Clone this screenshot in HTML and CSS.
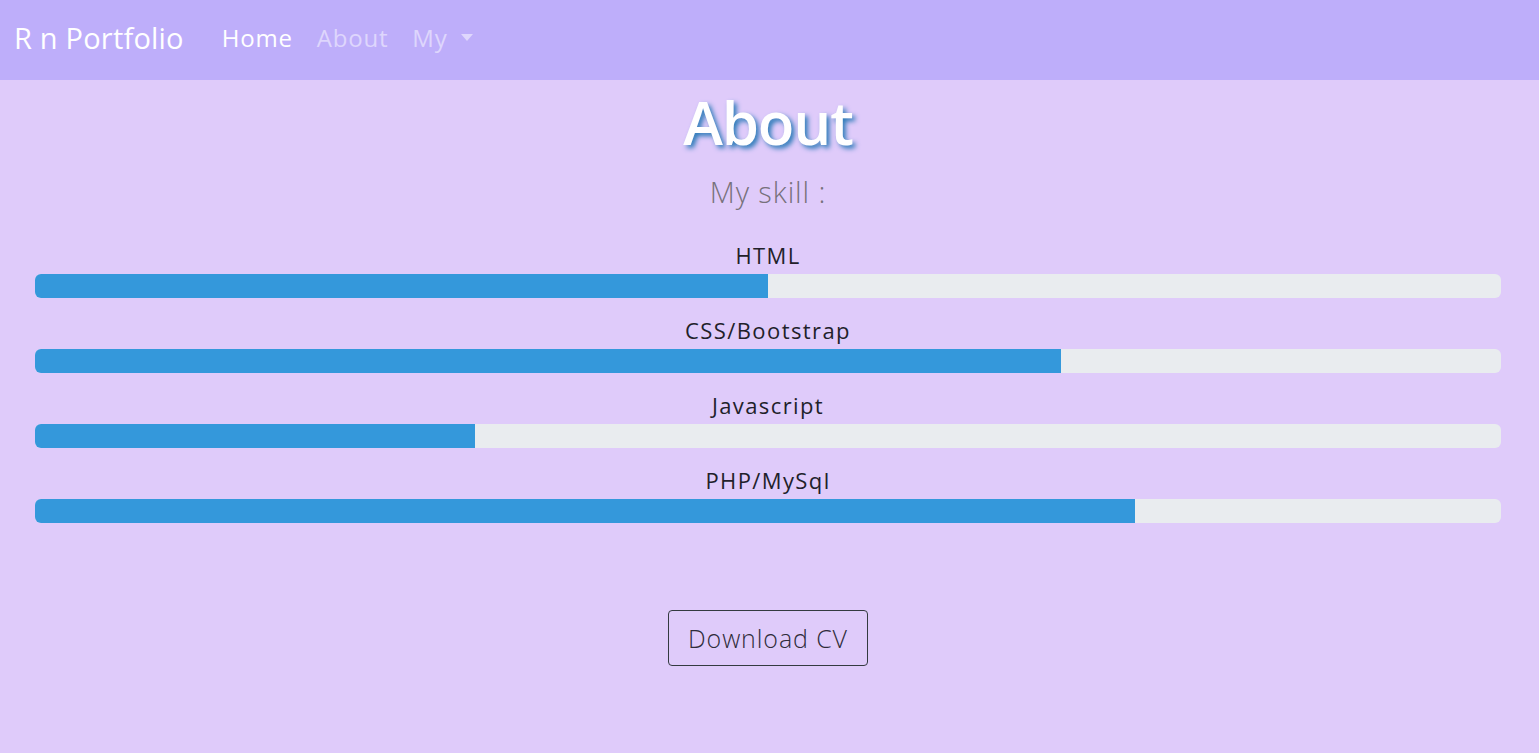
FILE: index.html
```html
<!DOCTYPE html>
<html>
<head>
<meta charset="utf-8">
<link rel="stylesheet" href="styles.css">
</head>
<body>
<nav class="navbar">
  <a class="brand" href="#">R n Portfolio</a>
  <ul class="nav">
    <li><a class="nav-link active" href="#">Home</a></li>
    <li><a class="nav-link" href="#">About</a></li>
    <li><a class="nav-link dropdown" href="#">My</a></li>
  </ul>
</nav>
<main class="about">
  <h1 class="title">About</h1>
  <h3 class="subtitle">My skill :</h3>
  <div class="skills">
    <div class="skill">
      <div class="label">HTML</div>
      <div class="progress"><div class="bar" style="width:50%"></div></div>
    </div>
    <div class="skill">
      <div class="label">CSS/Bootstrap</div>
      <div class="progress"><div class="bar" style="width:70%"></div></div>
    </div>
    <div class="skill">
      <div class="label">Javascript</div>
      <div class="progress"><div class="bar" style="width:30%"></div></div>
    </div>
    <div class="skill">
      <div class="label">PHP/MySql</div>
      <div class="progress"><div class="bar" style="width:75%"></div></div>
    </div>
  </div>
  <div class="actions">
    <a class="btn" href="#">Download CV</a>
  </div>
</main>
</body>
</html>
```
FILE: styles.css
```css
* { box-sizing: border-box; }
html, body { margin: 0; padding: 0; }
body {
  font-family: "Open Sans", "Noto Sans", sans-serif;
  background: #dfcbfa;
  color: #212529;
  height: 753px;
  overflow: hidden;
}
a { text-decoration: none; }
.navbar {
  height: 80px;
  background: #beaefa;
  display: flex;
  align-items: center;
  padding: 0 14px 5px;
}
.brand {
  color: #fff;
  font-size: 29px;
  font-weight: 400;
  margin-right: 26px;
  letter-spacing: 0.2px;
}
.nav {
  display: flex;
  list-style: none;
  margin: 0;
  padding: 0;
}
.nav-link {
  display: block;
  font-size: 24px;
  letter-spacing: 0.8px;
  color: rgba(255,255,255,0.5);
  padding: 0 12px 0 12px;
}
.nav-link.active { color: #fff; }
.dropdown::after {
  content: "";
  display: inline-block;
  margin-left: 13px;
  vertical-align: 6px;
  border-top: 7px solid;
  border-left: 6px solid transparent;
  border-right: 6px solid transparent;
}
.about {
  text-align: center;
  padding: 0 38px 0 35px;
}
.title {
  margin: 6px 0 0;
  font-size: 60px;
  font-weight: 600;
  line-height: 72px;
  color: #fff;
  letter-spacing: -1.2px;
  text-shadow: 3px 3px 5px #2a7ab8;
}
.subtitle {
  margin: 0;
  font-size: 29px;
  font-weight: 300;
  letter-spacing: 0.9px;
  color: #77717b;
  line-height: 68px;
}
.skills {
  margin-top: 14px;
  display: flex;
  flex-direction: column;
  gap: 17px;
}
.label {
  font-size: 22px;
  line-height: 30px;
  letter-spacing: 1.4px;
  margin-bottom: 4px;
  color: #221f2a;
}
.progress {
  height: 24px;
  background: #e9ecef;
  border-radius: 6px;
  overflow: hidden;
  display: flex;
}
.bar {
  background: #3498db;
  height: 100%;
}
.actions {
  margin-top: 87px;
  display: flex;
  justify-content: center;
}
.btn {
  display: inline-flex;
  align-items: center;
  justify-content: center;
  width: 200px;
  height: 56px;
  border: 1px solid #343a40;
  border-radius: 4px;
  color: #2f2d3a;
  font-size: 25px;
  letter-spacing: 0.9px;
  font-weight: 300;
}
```
